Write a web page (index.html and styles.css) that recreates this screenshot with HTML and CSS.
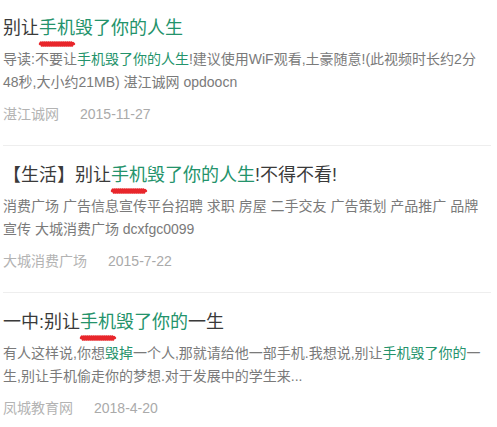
FILE: index.html
```html
<!DOCTYPE html>
<html lang="zh-CN">
<head>
<meta charset="utf-8">
<title>别让手机毁了你的人生</title>
<link rel="stylesheet" href="styles.css">
</head>
<body>
<ul class="list">
  <li class="item">
    <h3 class="title">别让<span class="hl mark">手机<svg class="squiggle" viewBox="0 0 40 6" preserveAspectRatio="none"><path d="M2 3 L3 1.5 L4 4.5 L5 1.5 L6 4.5 L7 1.5 L8 4.5 L9 1.5 L10 4.5 L11 1.5 L12 4.5 L13 1.5 L14 4.5 L15 1.5 L16 4.5 L17 1.5 L18 4.5 L19 1.5 L20 4.5 L21 1.5 L22 4.5 L23 1.5 L24 4.5 L25 1.5 L26 4.5 L27 1.5 L28 4.5 L29 1.5 L30 4.5 L31 1.5 L32 4.5 L33 1.5 L34 4.5 L35 1.5 L36 4.5 L37 2 L38 3"/></svg></span><span class="hl">毁了你的人生</span></h3>
    <p class="desc">导读:不要让<span class="hl">手机毁了你的人生</span>!建议使用WiF观看,土豪随意!(此视频时长约2分48秒,大小约21MB) 湛江诚网 opdoocn</p>
    <div class="meta"><span class="src">湛江诚网</span><span class="date">2015-11-27</span></div>
  </li>
  <li class="item">
    <h3 class="title">【生活】别让<span class="hl mark">手机<svg class="squiggle" viewBox="0 0 40 6" preserveAspectRatio="none"><path d="M2 3 L3 1.5 L4 4.5 L5 1.5 L6 4.5 L7 1.5 L8 4.5 L9 1.5 L10 4.5 L11 1.5 L12 4.5 L13 1.5 L14 4.5 L15 1.5 L16 4.5 L17 1.5 L18 4.5 L19 1.5 L20 4.5 L21 1.5 L22 4.5 L23 1.5 L24 4.5 L25 1.5 L26 4.5 L27 1.5 L28 4.5 L29 1.5 L30 4.5 L31 1.5 L32 4.5 L33 1.5 L34 4.5 L35 1.5 L36 4.5 L37 2 L38 3"/></svg></span><span class="hl">毁了你的人生</span>!不得不看!</h3>
    <p class="desc">消费广场 广告信息宣传平台招聘 求职 房屋 二手交友 广告策划 产品推广 品牌宣传 大城消费广场 dcxfgc0099</p>
    <div class="meta"><span class="src">大城消费广场</span><span class="date">2015-7-22</span></div>
  </li>
  <li class="item">
    <h3 class="title">一中:别让<span class="hl mark">手机<svg class="squiggle" viewBox="0 0 40 6" preserveAspectRatio="none"><path d="M2 3 L3 1.5 L4 4.5 L5 1.5 L6 4.5 L7 1.5 L8 4.5 L9 1.5 L10 4.5 L11 1.5 L12 4.5 L13 1.5 L14 4.5 L15 1.5 L16 4.5 L17 1.5 L18 4.5 L19 1.5 L20 4.5 L21 1.5 L22 4.5 L23 1.5 L24 4.5 L25 1.5 L26 4.5 L27 1.5 L28 4.5 L29 1.5 L30 4.5 L31 1.5 L32 4.5 L33 1.5 L34 4.5 L35 1.5 L36 4.5 L37 2 L38 3"/></svg></span><span class="hl">毁了你的</span>一生</h3>
    <p class="desc">有人这样说,你想<span class="hl">毁掉</span>一个人,那就请给他一部手机.我想说,别让<span class="hl">手机毁了你的</span>一生,别让手机偷走你的梦想.对于发展中的学生来...</p>
    <div class="meta"><span class="src">凤城教育网</span><span class="date">2018-4-20</span></div>
  </li>
</ul>
</body>
</html>
```

FILE: styles.css
```css
html, body {
  margin: 0;
  padding: 0;
  background: #ffffff;
}

body {
  font-family: "Liberation Sans", "Noto Sans CJK SC", sans-serif;
  color: #333333;
}

.list {
  list-style: none;
  margin: 0;
  padding: 0 6px 0 3px;
}

.item {
  padding: 14px 0 21px;
  border-bottom: 1px solid #eeeeee;
}

.item + .item {
  padding-top: 15px;
}

.title {
  margin: 0;
  font-size: 18px;
  font-weight: normal;
  line-height: 28px;
  color: #3a3a3a;
}

.hl {
  color: #24936b;
}

.mark {
  position: relative;
}

.squiggle {
  position: absolute;
  left: -1px;
  bottom: -9px;
  width: 38px;
  height: 6px;
  overflow: visible;
}

.squiggle path {
  fill: none;
  stroke: #e8262b;
  stroke-width: 2.4;
  stroke-linejoin: round;
  stroke-linecap: round;
}

.desc {
  margin: 6px 0 0;
  font-size: 14px;
  line-height: 23px;
  color: #7a7a7a;
}

.meta {
  margin-top: 10px;
  font-size: 14px;
  line-height: 20px;
  color: #aaaaaa;
  display: flex;
  gap: 21px;
}

.src {
  color: #b3b3b3;
}

.date {
  color: #aaaaaa;
}
```
